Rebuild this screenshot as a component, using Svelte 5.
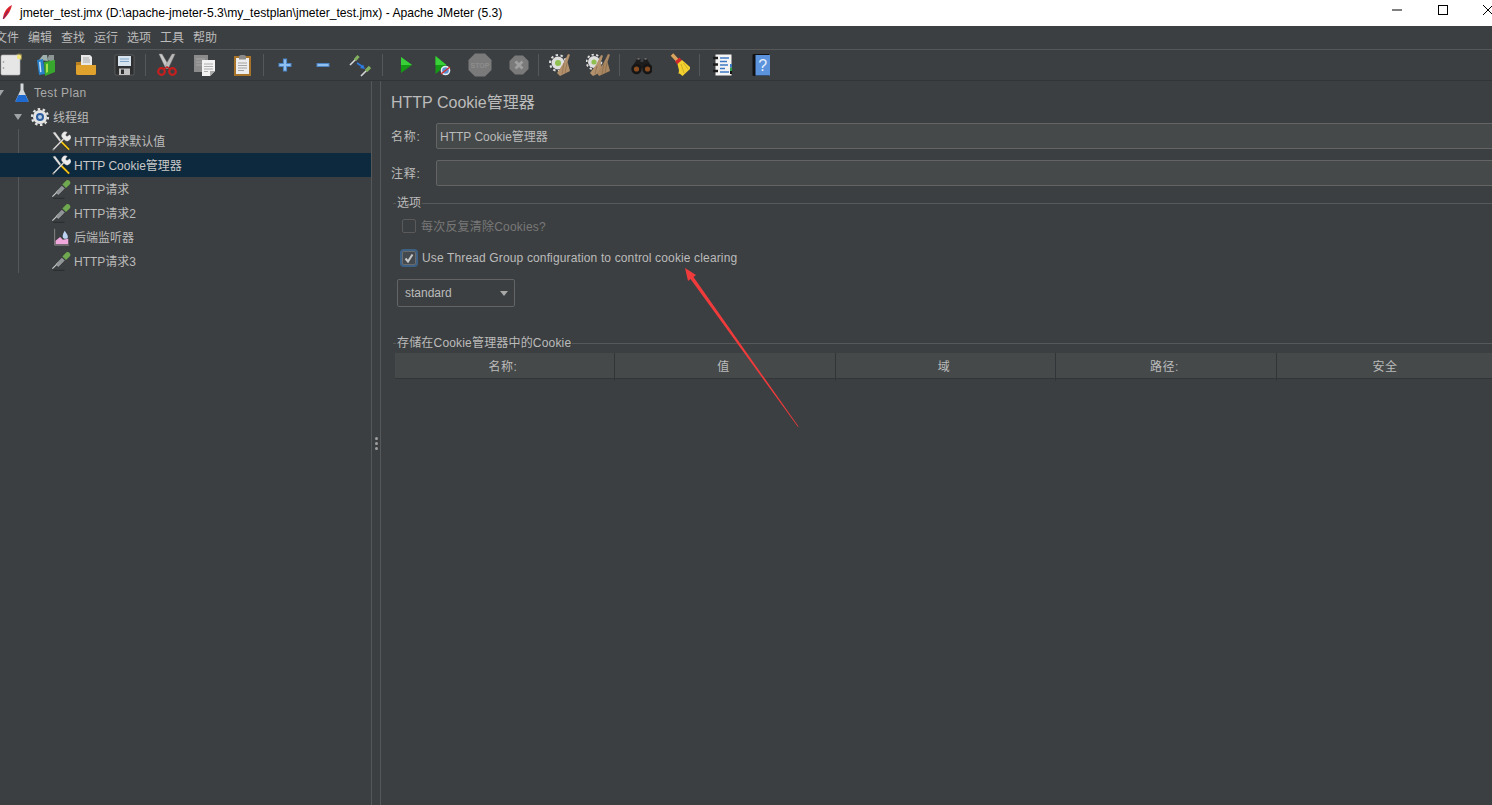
<script>
  const menus = ['文件','编辑','查找','运行','选项','工具','帮助'];
  const cols = ['名称:','值','域','路径:','安全'];
</script>

{#snippet wrench()}
  <svg class="ti" viewBox="0 0 22 22">
    <path d="M2 2 L4.500 1 L11 10 L9.500 11.500Z" fill="#e2e2e2" stroke="#777" stroke-width=".3"/>
    <path d="M10.500 11 L20 20.500" stroke="#222" stroke-width="3.200"/>
    <path d="M10.500 11 L20 20.500" stroke="#f0c419" stroke-width="2"/>
    <path d="M2 21 L14.500 8" stroke="#dcdcdc" stroke-width="1.500"/>
    <path d="M1.500 20 L3 21.500" stroke="#666" stroke-width="1.500"/>
    <path d="M13.500 8.500 A3.800 3.800 0 0 1 18 1.500 L16 4.500 L17.500 6 L20.500 4 A3.800 3.800 0 0 1 15 10Z" fill="#ececec" stroke="#777" stroke-width=".3"/>
  </svg>
{/snippet}
{#snippet dropper()}
  <svg class="ti" viewBox="0 0 22 22">
    <path d="M1.500 19.500 L8 13" stroke="#d0d0d0" stroke-width="1.200"/>
    <path d="M5.500 14.500 L12 8 L14.500 10.500 L8 17Z" fill="#8e9396" stroke="#d5d5d5" stroke-width=".5"/>
    <path d="M12.500 6 L16.500 10 L21 5.500 A3 3 0 0 0 17 1.500Z" fill="#6fa84f"/>
    <path d="M2 21.300 H15" stroke="#2c2f31" stroke-width="1.300"/>
  </svg>
{/snippet}

<div class="app">
  <header class="title">
    <svg class="feather" viewBox="0 0 12 16"><path d="M2 15 C2 9 6 3 11 1 C10 6 7 11 3 15Z" fill="#d8232e"/><path d="M2 15 L7 7" stroke="#7a1f6a"/></svg>
    <span class="tt">jmeter_test.jmx (D:\apache-jmeter-5.3\my_testplan\jmeter_test.jmx) - Apache JMeter (5.3)</span>
    <div class="win">
      <svg viewBox="0 0 12 12"><path d="M1 6H11" stroke="#000"/></svg>
      <svg viewBox="0 0 12 12"><rect x="1.500" y="1.500" width="9" height="9" fill="none" stroke="#000"/></svg>
      <svg viewBox="0 0 12 12"><path d="M1 1L11 11M11 1L1 11" stroke="#000"/></svg>
    </div>
  </header>

  <nav class="menu">
    {#each menus as m}<span>{m}</span>{/each}
  </nav>

  <div class="toolbar">
    <!-- new -->
    <svg class="ic" viewBox="0 0 24 24"><circle cx="21" cy="4" r="3.500" fill="#8f8550"/><rect x="3" y="2" width="19" height="20" rx="1.500" fill="#e6e6e6" stroke="#b5b5b5" stroke-width=".6"/><circle cx="5.500" cy="9" r=".8" fill="#8a8a8a"/><circle cx="5.500" cy="15" r=".8" fill="#8a8a8a"/><circle cx="21" cy="4" r="2.200" fill="#f6e77e"/></svg>
    <!-- templates -->
    <svg class="ic" viewBox="2 0 24 24"><path d="M5 7L9 2H13L14 8Z" fill="#9fb0ad"/><path d="M13 7L15 2H20L20 9Z" fill="#8c9795"/><path d="M3 7L9 6L11 21L5 22Z" fill="#2a7fc9"/><path d="M5 9L6.500 8.700L7.500 19L6 19.300Z" fill="#c8e4f6"/><path d="M10 9L21 7V19L11 23Z" fill="#38a72e"/><path d="M12 11L14 10.500V19L12 20Z" fill="#a6e04a"/></svg>
    <!-- open -->
    <svg class="ic" viewBox="0 0 24 24"><path d="M7 2H16L18 4V14H7Z" fill="#e8e8e8"/><path d="M9 5H15M9 7H16M9 9H16" stroke="#9a9a9a" stroke-width=".8"/><path d="M2 9H6L7 8V12H22V20Q22 22 20 22H4Q2 22 2 20Z" fill="#b9811f"/><path d="M2 13Q2 12 4 12H22V20Q22 22 20 22H4Q2 22 2 20Z" fill="#e0a22d"/></svg>
    <!-- save -->
    <svg class="ic" viewBox="1 0 24 24"><path d="M3 3Q3 2 4 2H21L22 3V21Q22 22 21 22H4Q3 22 3 21Z" fill="#2d2f30" stroke="#777" stroke-width=".5"/><rect x="6" y="3" width="13" height="10" fill="#d7e4f0"/><path d="M8 6H17M8 8.500H17" stroke="#7fa6c8"/><rect x="7" y="15.500" width="11" height="6.500" fill="#c2c2c2"/><rect x="9" y="16.500" width="3" height="4.500" fill="#2d2f30"/></svg>
    <i></i>
    <!-- cut -->
    <svg class="ic" viewBox="0 0 24 24"><path d="M4 1L7 1L14 13L11 16Z" fill="#c9c9c9" stroke="#8a8a8a" stroke-width=".4"/><path d="M20 1L17 1L10 13L13 16Z" fill="#b9b9b9" stroke="#8a8a8a" stroke-width=".4"/><circle cx="6.500" cy="18.500" r="3.300" fill="none" stroke="#c81e1e" stroke-width="2.200"/><circle cx="17.500" cy="18.500" r="3.300" fill="none" stroke="#c81e1e" stroke-width="2.200"/><path d="M9 16L12 14L15 16" stroke="#c81e1e" stroke-width="1.500" fill="none"/></svg>
    <!-- copy -->
    <svg class="ic" viewBox="0 0 24 24"><rect x="1" y="2" width="14" height="17" fill="#8b8b8b"/><path d="M3 6H12M3 9H12M3 12H12" stroke="#a5a5a5"/><path d="M9 7H22V18L17 23H9Z" fill="#f2f2f2"/><path d="M22 18H17V23Z" fill="#a9a9a9"/><path d="M11 11H20M11 13.500H20M11 16H20M11 18.500H15" stroke="#9a9a9a" stroke-width=".8"/></svg>
    <!-- paste -->
    <svg class="ic" viewBox="0 0 24 24"><rect x="3" y="3" width="17" height="20" fill="#a8742a"/><rect x="5" y="5" width="13" height="16" fill="#ededed"/><path d="M8 4Q8 2 10 2H13Q15 2 15 4V6.500H8Z" fill="#8a8a8a"/><path d="M7 10H16M7 12.500H16M7 15H16M7 17.500H13" stroke="#8f8f8f" stroke-width=".8"/></svg>
    <i></i>
    <!-- plus -->
    <svg class="ic" viewBox="0 0 24 24"><path d="M12 5.500V18.500M5.500 12H18.500" stroke="#4d85c4" stroke-width="4.200"/><path d="M12 6.500V17.500M6.500 12H17.500" stroke="#8fc0f0" stroke-width="2.200"/></svg>
    <!-- minus -->
    <svg class="ic" viewBox="0 0 24 24"><path d="M5.500 12H18.500" stroke="#4d85c4" stroke-width="4"/><path d="M6.500 12H17.500" stroke="#8fc0f0" stroke-width="2"/></svg>
    <!-- toggle -->
    <svg class="ic" viewBox="0 0 24 24"><path d="M1 12L7 6" stroke="#d8d8d8" stroke-width="1.600"/><path d="M6 7L9.500 3" stroke="#80b060" stroke-width="3.200"/><path d="M12 23L18 17" stroke="#d8d8d8" stroke-width="1.600"/><path d="M17 18L21 14" stroke="#80b060" stroke-width="3.200"/><path d="M8 10L14 14" stroke="#2f7be0" stroke-width="1.600"/><path d="M16 16L11 15L14 11.500Z" fill="#2f7be0"/></svg>
    <i></i>
    <!-- run -->
    <svg class="ic" viewBox="-3 0 24 24"><path d="M7 4L18 12L7 20Z" fill="#149a14"/><path d="M7 4L18 12H7Z" fill="#39d039"/></svg>
    <!-- run no pause -->
    <svg class="ic" viewBox="0 0 24 24"><path d="M5.500 3L16.500 12L5.500 21Z" fill="#149a14"/><path d="M5.500 3L16.500 12H5.500Z" fill="#39d039"/><circle cx="15.500" cy="17.500" r="4.800" fill="#e8eef7"/><circle cx="15.500" cy="17.500" r="3.300" fill="#5a8fd0"/><path d="M11 21L20 14" stroke="#d32f2f" stroke-width="1.500"/></svg>
    <!-- stop -->
    <svg class="ic" viewBox="0 0 24 24"><path d="M7 0.500H17L23.500 7V17L17 23.500H7L0.500 17V7Z" fill="#7a7a7a"/><text x="12" y="14.800" class="stop">STOP</text></svg>
    <!-- shutdown -->
    <svg class="ic" viewBox="-1 0 24 24"><path d="M8 2.500H16L21.500 8V16L16 21.500H8L2.500 16V8Z" fill="#7a7a7a"/><path d="M8.500 8.500L15.500 15.500M15.500 8.500L8.500 15.500" stroke="#a0a0a0" stroke-width="2.800"/></svg>
    <i></i>
    <!-- clear -->
    <svg class="ic" viewBox="-1 0 24 24"><circle cx="9" cy="10" r="6.500" fill="#dedede"/><circle cx="9" cy="10" r="8" fill="none" stroke="#dedede" stroke-width="2" stroke-dasharray="2.500 2.500"/><circle cx="9" cy="10" r="3" fill="#8fc04f"/><path d="M19 1L21 1.800L18.500 9L21 18L11 23L8 20L14 11Z" fill="#b3916d"/><path d="M15 10L13 21M18 10L16 20" stroke="#8d6d4c" stroke-width=".7"/></svg>
    <!-- clear all -->
    <svg class="ic" viewBox="-1 0 24 24"><circle cx="7" cy="9" r="6" fill="#dedede"/><circle cx="7" cy="9" r="7.400" fill="none" stroke="#dedede" stroke-width="1.800" stroke-dasharray="2.300 2.300"/><circle cx="7" cy="9" r="2.600" fill="#8fc04f"/><path d="M14 2L16 2.800L13.500 10L16 18L6 23L3 20L9 12Z" fill="#b3916d"/><path d="M21 1L23 1.800L20.500 9L23 18L12 23L10 20L16 11Z" fill="#a98762"/><path d="M17 10L15 21M20 10L18 20M10 13L8 21" stroke="#866848" stroke-width=".7"/></svg>
    <i></i>
    <!-- search -->
    <svg class="ic" viewBox="-2 0 24 24"><path d="M7 6H10.500V9H13.500V6H17L22.500 15H1.500Z" fill="#1d1d1d"/><path d="M7.500 6L9.500 6" stroke="#999"/><path d="M14.500 6L16.500 6" stroke="#999"/><circle cx="6.500" cy="16" r="5.200" fill="#161616"/><circle cx="17.500" cy="16" r="5.200" fill="#161616"/><circle cx="6.500" cy="16" r="2.600" fill="#8b4d1f"/><circle cx="17.500" cy="16" r="2.600" fill="#8b4d1f"/></svg>
    <!-- broom -->
    <svg class="ic" viewBox="-2 0 24 24"><path d="M4 1.500L10 8" stroke="#dba35c" stroke-width="3.400"/><path d="M7 8.500L11.500 4.500L14 7.500L9.500 11.500Z" fill="#d22a2a"/><path d="M9.500 11L14 7L23 15L14.500 23L11.500 20.500L10.500 21L11 17.500Z" fill="#f2d02f"/><path d="M13 11L16 20M15.500 10L20 16" stroke="#b8971c" stroke-width=".6"/></svg>
    <i></i>
    <!-- log viewer -->
    <svg class="ic" viewBox="-3 0 24 24"><rect x="4.500" y="1.500" width="16" height="21" fill="#f4f4f4"/><path d="M9 5H18M9 8.500H16M9 12H17M9 15.500H14M9 19H18" stroke="#3d78c4" stroke-width="1.400"/><path d="M2 5H7M2 11.500H7M2 18H7" stroke="#1d1d1d" stroke-width="2.400"/><rect x="19" y="11" width="3" height="3.500" fill="#3d78c4"/><rect x="19" y="14.500" width="3" height="3.500" fill="#2c9f4c"/><rect x="19" y="18" width="3" height="3" fill="#111"/></svg>
    <!-- help -->
    <svg class="ic" viewBox="-3 0 24 24"><path d="M3.500 2Q3.500 1 5 1H20V23H5Q3.500 23 3.500 22Z" fill="#111"/><rect x="6.500" y="2" width="14.500" height="20.500" fill="#5b93dc"/><text x="13.700" y="17.500" class="q">?</text></svg>
  </div>

  <main class="body">
    <aside class="tree">
      <div class="row l0">
        <span class="tw"></span>
        <svg class="ti" viewBox="0 0 20 20"><path d="M8.500 0.500H11.500V7L16.500 18Q16.500 19 15 19H5Q3.500 19 3.500 18L8.500 7Z" fill="#d4d9dd"/><path d="M6.500 12H13.500L16.500 18Q16.500 19 15 19H5Q3.500 19 3.500 18Z" fill="#1f6ad0"/></svg>
        <span class="lbl plan">Test Plan</span>
      </div>
      <div class="row l1">
        <span class="tw"></span>
        <svg class="ti" viewBox="0 0 20 20"><circle cx="10" cy="10" r="7" fill="#e4e4e4"/><circle cx="10" cy="10" r="8" fill="none" stroke="#e4e4e4" stroke-width="2.200" stroke-dasharray="2.500 2.520"/><circle cx="10" cy="10" r="4" fill="#2e5e9e"/><circle cx="10" cy="10" r="2" fill="#b8cde4"/></svg>
        <span class="lbl up">线程组</span>
      </div>
      <div class="kids">
        <div class="row leaf">{@render wrench()}<span class="lbl up">HTTP请求默认值</span></div>
        <div class="row leaf sel">{@render wrench()}<span class="lbl up">HTTP Cookie管理器</span></div>
        <div class="row leaf">{@render dropper()}<span class="lbl up">HTTP请求</span></div>
        <div class="row leaf">{@render dropper()}<span class="lbl up">HTTP请求2</span></div>
        <div class="row leaf">
          <svg class="ti" viewBox="0 0 22 22"><path d="M4 2V20H20" fill="none" stroke="#8a8a8a"/><path d="M5 19V15L10 11L13 14L19 13V19Z" fill="#f0a8dc"/><path d="M15 4C12 9 12 13 16 13C20 13 19 9 15 4Z" fill="#bcd4f2"/></svg>
          <span class="lbl up">后端监听器</span>
        </div>
        <div class="row leaf">{@render dropper()}<span class="lbl up">HTTP请求3</span></div>
      </div>
    </aside>

    <div class="divider"><b></b><b></b><b></b></div>

    <section class="panel">
      <h1>HTTP Cookie管理器</h1>
      <div class="field name">
        <label for="nm">名称:</label>
        <input id="nm" value="HTTP Cookie管理器" />
      </div>
      <div class="field note">
        <label for="cm">注释:</label>
        <input id="cm" value="" />
      </div>

      <fieldset class="opts">
        <legend>选项</legend>
        <div class="chk off"><span class="box"></span><span class="up2">每次反复清除Cookies?</span></div>
        <div class="chk on">
          <span class="box">
            <svg viewBox="0 0 12 12"><path d="M2.500 6.500L5 9.500L9.500 2.500" fill="none" stroke="#c8c8c8" stroke-width="2"/></svg>
          </span>
          <span class="use">Use Thread Group configuration to control cookie clearing</span>
        </div>
        <div class="select">
          <span>standard</span>
          <span class="caret"></span>
        </div>
      </fieldset>

      <fieldset class="store">
        <legend>存储在Cookie管理器中的Cookie</legend>
        <div class="thead">
          {#each cols as c}<div>{c}</div>{/each}
        </div>
      </fieldset>
    </section>
  </main>

  <svg class="arrow" viewBox="0 0 130 170" width="130" height="170">
    <path d="M5 3L16 10L13.500 12L118.500 161.500L118 162L10.500 14L8 16Z" fill="#ef3b3b"/>
  </svg>
</div>

<style>
  :global(body) { margin: 0; background: #3c3f41; overflow: hidden; }
  .app {
    position: relative;
    width: 1492px; height: 805px; overflow: hidden;
    display: flex; flex-direction: column;
    background: #3c3f41; color: #bbb;
    font: 12px "Liberation Sans", "Noto Sans CJK SC", sans-serif;
  }
  .title {
    height: 26px; flex: none; background: #fff; color: #000;
    display: flex; align-items: center;
    font-size: 12.150px;
  }
  .feather { width: 12px; height: 16px; margin: -2px 7px 0 1px; flex: none; }
  .tt { white-space: nowrap; }
  .win { margin-left: auto; display: flex; gap: 33.500px; margin-right: -2px; margin-top: -6px; }
  .win svg { width: 12px; height: 12px; display: block; }
  .menu {
    height: 24px; flex: none; display: flex; align-items: center;
    gap: 9px; box-sizing: border-box;
    padding-bottom: 2px;
    color: #bbb; font-size: 12px;
    border-bottom: 1px solid #555758;
  }
  .menu span:first-child { margin-left: -5px; }
  .toolbar {
    height: 31px; flex: none; box-sizing: border-box;
    display: flex; align-items: center;
    border-bottom: 1px solid #323537;
  }
  .ic { width: 24px; height: 24px; flex: none; margin-right: 14.200px; }
  .ic:first-child { margin-left: -2px; }
  .toolbar i { width: 1px; height: 22px; background: #55585a; flex: none; margin: 0 8.500px 0 -5.700px; }
  .stop { font: bold 7px "Liberation Sans", sans-serif; fill: #8d8d8d; text-anchor: middle; }
  .q { font: 16px "Liberation Sans", sans-serif; fill: #e6eefb; text-anchor: middle; }

  .body { flex: 1; display: flex; min-height: 0; }
  .tree { width: 371px; flex: none; box-sizing: border-box; }
  .row { height: 24px; display: flex; align-items: center; white-space: nowrap; }
  .ti { width: 20px; height: 20px; flex: none; }
  .lbl { margin-left: 3px; color: #bbb; font-size: 12px; }
  .lbl.up { padding-bottom: 2px; }
  .lbl.plan { letter-spacing: .35px; color: #aaa; margin-left: 2px; }
  .tw {
    width: 0; height: 0; border-left: 4.500px solid transparent; border-right: 4.500px solid transparent;
    border-top: 6px solid #a0a3a5; flex: none;
  }
  .l0 .tw { margin-left: -4px; margin-right: 8px; }
  .l1 .tw { margin-left: 14px; margin-right: 8px; }
  .kids { margin-left: 18px; border-left: 1px solid #55585a; }
  .leaf { margin-left: -19px; padding-left: 51px; }
  .leaf .ti { width: 20px; height: 20px; }
  .leaf .lbl { margin-left: 3px; }
  .leaf.sel { background: #0d293e; }
  .leaf.sel .lbl { color: #c8c8c8; }

  .divider {
    width: 8px; flex: none; border-left: 1px solid #555758; border-right: 1px solid #555758;
    display: flex; flex-direction: column; align-items: center; justify-content: center; gap: 2px;
  }
  .divider b { width: 3px; height: 3px; border-radius: 50%; background: #a0a0a0; display: block; }

  .panel { flex: 1; min-width: 0; padding: 0 0 0 10px; overflow: hidden; }
  h1 { margin: 13px 0 0; font-size: 16px; font-weight: normal; color: #bbb; line-height: 18px; }
  .field { display: flex; align-items: center; height: 26px; }
  .field.name { margin-top: 11px; }
  .field.note { margin-top: 11px; }
  .field label { width: 45px; flex: none; font-size: 12px; color: #bbb; letter-spacing: .8px; padding-bottom: 1px; }
  .field input {
    flex: 1; min-width: 0; height: 26px; box-sizing: border-box;
    background: #45494a; border: 1px solid #646464; border-radius: 2px;
    color: #bbb; padding: 0 3px 2px; margin-right: -20px;
    font: 12px "Liberation Sans", "Noto Sans CJK SC", sans-serif;
  }
  fieldset { border: 0; border-top: 1px solid #565859; margin: 0; padding: 0; min-width: 0; }
  legend { padding: 0 1px; margin-left: 3px; font-size: 12px; color: #bbb; line-height: 14px; }
  .opts { margin: 10px -20px 0 2px; }
  .chk { display: flex; align-items: center; white-space: nowrap; }
  .box { width: 12px; height: 12px; border: 1px solid #646464; border-radius: 2px; flex: none; display: block; }
  .off { margin: 6px 0 0 9px; gap: 5px; color: #787878; height: 20px; letter-spacing: .2px; }
  .up2 { padding-bottom: 2px; }
  .off .box { border-color: #5a5a5a; }
  .on { margin: 12px 0 0 9px; gap: 6px; height: 20px; }
  .use { letter-spacing: .14px; }
  .on .box { background: #43494e; border-color: #6b6b6b; box-shadow: 0 0 0 2px #3d6185; }
  .on .box svg { width: 12px; height: 12px; display: block; }
  .select {
    width: 118px; height: 28px; margin: 11px 0 0 4px; box-sizing: border-box;
    border: 1px solid #646464; border-radius: 2px;
    display: flex; align-items: center; justify-content: space-between;
    padding: 0 6px 0 7px;
  }
  .caret { width: 0; height: 0; border-left: 4.500px solid transparent; border-right: 4.500px solid transparent; border-top: 5px solid #a8a8a8; }
  .store { margin: 29px -20px 0 2px; }
  .store legend { letter-spacing: .18px; }
  .thead {
    display: grid; grid-template-columns: 220px 221px 220px 221px 220px;
    margin: 3px 0 0 2px; height: 26px; background: #45494a;
    border-bottom: 1px solid #323537; box-sizing: border-box;
  }
  .thead div { text-align: center; line-height: 28px; border-right: 1px solid #323537; color: #bbb; padding-right: 3px; letter-spacing: .5px; }
  .arrow { position: absolute; left: 680px; top: 265px; }
</style>
